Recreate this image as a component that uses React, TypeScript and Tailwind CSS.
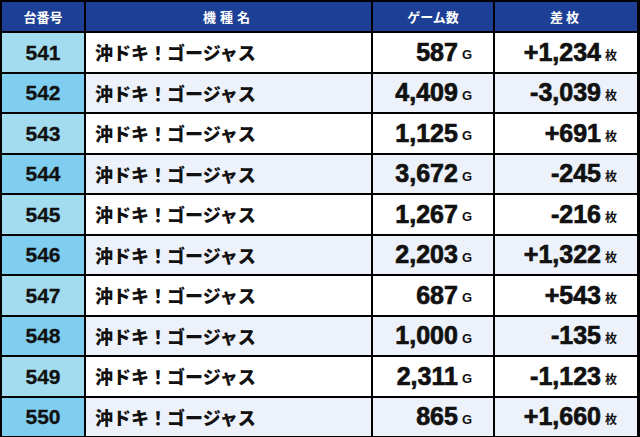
import React from 'react';

interface Row {
  no: number;
  games: string;
  diff: string;
}

const rows: Row[] = [
  { no: 541, games: '587', diff: '+1,234' },
  { no: 542, games: '4,409', diff: '-3,039' },
  { no: 543, games: '1,125', diff: '+691' },
  { no: 544, games: '3,672', diff: '-245' },
  { no: 545, games: '1,267', diff: '-216' },
  { no: 546, games: '2,203', diff: '+1,322' },
  { no: 547, games: '687', diff: '+543' },
  { no: 548, games: '1,000', diff: '-135' },
  { no: 549, games: '2,311', diff: '-1,123' },
  { no: 550, games: '865', diff: '+1,660' },
];

const jp = "font-['Noto_Sans_CJK_JP',sans-serif]";
const num = "font-['Liberation_Sans','Noto_Sans_CJK_JP',sans-serif]";

const App: React.FC = () => {
  return (
    <div className="w-[640px] h-[437px] bg-black pt-[2px] pl-[2px] pr-[3px] pb-[1px]">
      <div className="grid h-full grid-cols-[82px_285px_120px_142px] grid-rows-[29px_repeat(10,minmax(0,1fr))] gap-[2px] leading-none">
        <div className={`bg-[#1d3f95] flex items-center justify-center text-white text-[13px] font-bold ${jp}`}>
          台番号
        </div>
        <div className={`bg-[#1d3f95] flex items-center justify-center text-white text-[13px] font-bold tracking-[4px] ${jp}`}>
          機種名
        </div>
        <div className={`bg-[#1d3f95] flex items-center justify-center text-white text-[13px] font-bold ${jp}`}>
          ゲーム数
        </div>
        <div className={`bg-[#1d3f95] flex items-center justify-center text-white text-[13px] font-bold tracking-[3px] ${jp}`}>
          差枚
        </div>

        {rows.map((row, i) => {
          const even = i % 2 === 1;
          const bg = even ? 'bg-[#edf2fa]' : 'bg-white';
          return (
            <React.Fragment key={row.no}>
              <div
                className={`${even ? 'bg-[#7fcdef]' : 'bg-[#a3dcef]'} flex items-center justify-center text-[21px] font-bold text-[#111] [-webkit-text-stroke:0.3px] ${num}`}
              >
                {row.no}
              </div>
              <div className={`${bg} flex items-center pl-[9px] text-[18px] font-black text-[#111] ${jp}`}>
                沖ドキ！ゴージャス
              </div>
              <div className={`${bg} flex items-center justify-end pr-[21px] text-[#111] ${num}`}>
                <span className="text-[25px] font-bold [-webkit-text-stroke:0.7px]">{row.games}</span>
                <span className="ml-[4px] mt-[5px] text-[13px] font-bold">G</span>
              </div>
              <div className={`${bg} flex items-center justify-end pr-[20px] text-[#111] ${num}`}>
                <span className="text-[25px] font-bold [-webkit-text-stroke:0.7px]">{row.diff}</span>
                <span className={`ml-[4px] mt-[5px] text-[12px] font-bold ${jp}`}>枚</span>
              </div>
            </React.Fragment>
          );
        })}
      </div>
    </div>
  );
};

export default App;
